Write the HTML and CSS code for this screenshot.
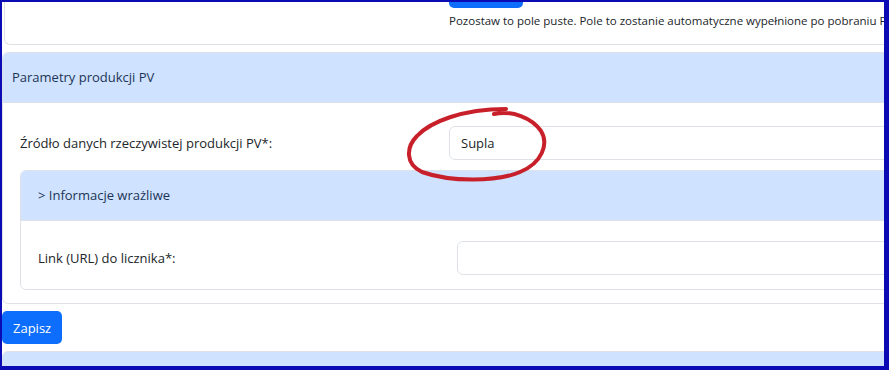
FILE: index.html
```html
<!DOCTYPE html>
<html lang="pl">
<head>
  <meta charset="UTF-8">
  <meta name="viewport" content="width=device-width, initial-scale=1.0">
  <title>Parametry produkcji PV</title>
  <link rel="stylesheet" href="styles.css">
</head>
<body>
  <div class="ramka">
    <div class="strona">

      <div class="karta karta-poprzednia">
        <div class="wiersz">
          <div class="kol-etykieta"></div>
          <div class="kol-pole">
            <div class="przycisk-ucinek"></div>
            <p class="pomoc">Pozostaw to pole puste. Pole to zostanie automatyczne wypełnione po pobraniu PV</p>
          </div>
        </div>
      </div>

      <div class="karta">
        <div class="karta-naglowek">Parametry produkcji PV</div>
        <div class="karta-tresc">
          <div class="wiersz wiersz-pola">
            <label class="kol-etykieta" for="zrodlo">Źródło danych rzeczywistej produkcji PV*:</label>
            <div class="kol-pole">
              <input type="text" id="zrodlo" class="pole" value="Supla">
            </div>
          </div>

          <div class="karta karta-wewn">
            <div class="karta-naglowek">&gt; Informacje wrażliwe</div>
            <div class="karta-tresc">
              <div class="wiersz wiersz-pola">
                <label class="kol-etykieta" for="link">Link (URL) do licznika*:</label>
                <div class="kol-pole">
                  <input type="text" id="link" class="pole">
                </div>
              </div>
            </div>
          </div>
        </div>
      </div>

      <button type="button" class="przycisk">Zapisz</button>

      <div class="karta karta-nastepna"></div>
    </div>

    <!-- odręczne zaznaczenie -->
    <svg class="kolko" width="160" height="90" viewBox="0 0 160 90">
      <path d="M 94 14 C 112 10, 132 18, 141 31 C 149 44, 142 63, 120 72 C 97 82, 50 82, 22 72 C 5 64, 6 47, 17 36 C 30 22, 62 9, 106 9"
            fill="none" stroke="#c8202a" stroke-width="4" stroke-linecap="round"/>
    </svg>
  </div>
</body>
</html>
```

FILE: styles.css
```css
body {
  margin: 0;
  font-family: "Open Sans", "Noto Sans", sans-serif;
  color: #212529;
  background: #fff;
}

.ramka {
  position: relative;
  height: 370px;
  box-sizing: border-box;
  border-style: solid;
  border-color: #0b0bb5;
  border-width: 2px 5px 4px 2px;
  overflow: hidden;
}

.strona {
  width: 1100px;
}

.karta {
  border: 1px solid #dee2e6;
  border-radius: 6px;
  background: #fff;
  margin-bottom: 7px;
  overflow: hidden;
}

.karta-poprzednia {
  margin-left: 2px;
  border-top: none;
  border-radius: 0 0 6px 6px;
  height: 42px;
}

.karta-naglowek {
  background: #cfe2ff;
  height: 49px;
  line-height: 49px;
  padding: 0 9px;
  font-size: 13px;
  color: #1c3557;
  border-bottom: 1px solid #dee2e6;
}

.karta-wewn .karta-naglowek {
  padding: 0 17px;
}

.karta-tresc {
  padding: 23px 17px 13px 17px;
}

.wiersz {
  display: flex;
  align-items: center;
}

.wiersz-pola {
  margin-bottom: 10px;
}

.karta-wewn .karta-tresc {
  padding: 20px 17px 4px 17px;
}

.karta-wewn {
  margin-bottom: 0;
}

.kol-etykieta {
  width: 429px;
  font-size: 13px;
  flex-shrink: 0;
}

.karta-wewn .kol-etykieta {
  width: 419px;
}

.kol-pole {
  flex: 1;
}

.karta-poprzednia .kol-etykieta {
  width: 444px;
}

.przycisk-ucinek {
  width: 74px;
  height: 6px;
  background: #0d6efd;
  border-radius: 0 0 5px 5px;
}

.pomoc {
  margin: 4px 0 0 0;
  font-size: 11.5px;
  line-height: 18px;
  white-space: nowrap;
}

.pole {
  display: block;
  width: 100%;
  box-sizing: border-box;
  height: 34px;
  padding: 0 11px;
  border: 1px solid #dee2e6;
  border-radius: 6px;
  font-family: inherit;
  font-size: 13px;
  color: #212529;
}

.przycisk {
  display: block;
  height: 33px;
  padding: 0 11px;
  margin-bottom: 7px;
  background: #0d6efd;
  color: #fff;
  border: none;
  border-radius: 5px;
  font-family: inherit;
  font-size: 13px;
  cursor: pointer;
}

.karta-nastepna {
  height: 30px;
  background: #cfe2ff;
  border-radius: 6px 6px 0 0;
}

.kolko {
  position: absolute;
  left: 398px;
  top: 98px;
}
```
